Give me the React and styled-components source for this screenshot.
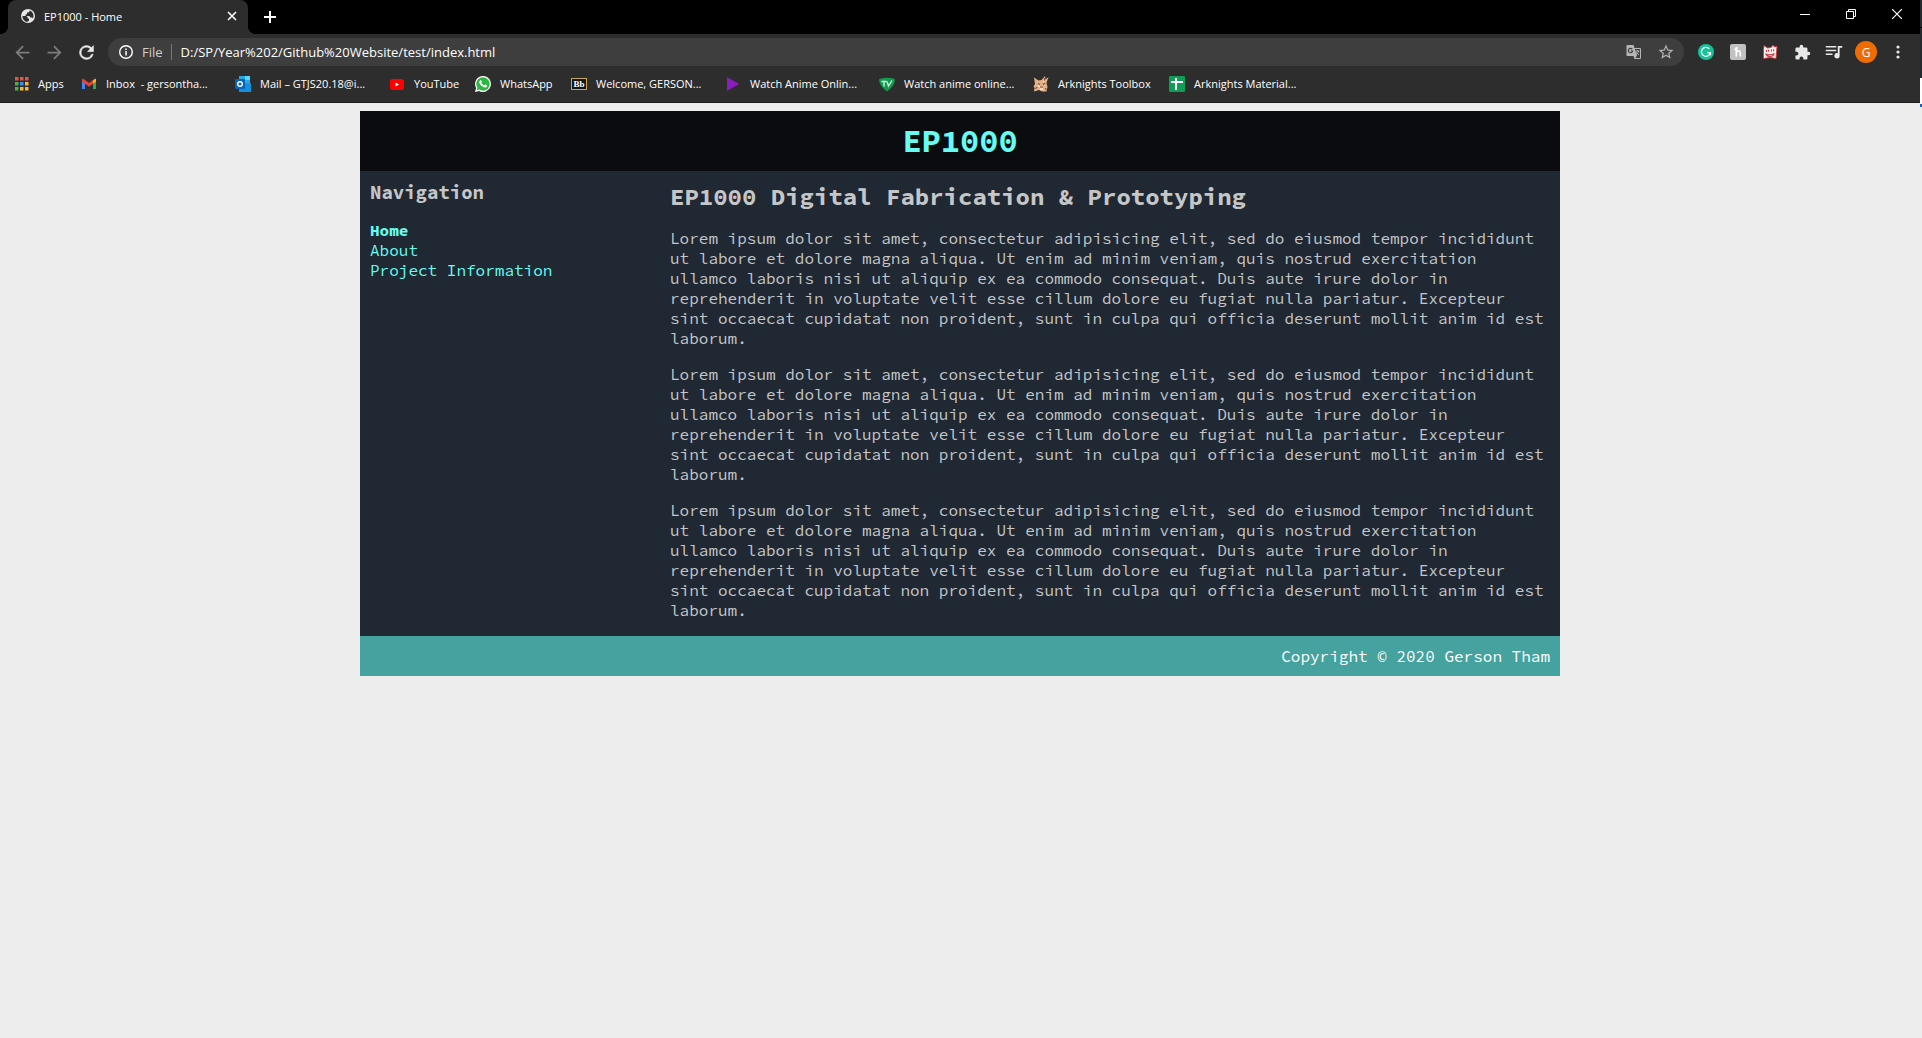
import React from "react";
import styled, { createGlobalStyle } from "styled-components";

const Global = createGlobalStyle`
  *, *::before, *::after { box-sizing: border-box; }
  body { margin: 0; background: #ededed; }
  button { border: 0; padding: 0; background: none; color: inherit; font: inherit; }
`;

const Desktop = styled.div`
  display: flex;
  align-items: flex-start;
  min-height: 100vh;
`;

const Browser = styled.div`
  flex: 1;
  min-width: 0;
`;

const Chrome = styled.header`
  font-family: "Open Sans", "Noto Sans", sans-serif;
  font-size: 12px;
  color: #fff;
  background: #2d2d2d;
  border-bottom: 1px solid #1b1b1b;
`;

const TabStrip = styled.div`
  display: flex;
  align-items: center;
  height: 34px;
  padding-left: 8px;
  background: #000;
`;

const Tab = styled.div`
  display: flex;
  align-items: center;
  gap: 8px;
  width: 240px;
  height: 34px;
  padding: 0 8px 2px 12px;
  border-radius: 8px 8px 0 0;
  background: #2d2d2d;
  font-size: 11px;
  position: relative;

  &::before, &::after {
    content: "";
    position: absolute;
    bottom: 0;
    width: 8px;
    height: 8px;
  }
  &::before { left: -8px; background: radial-gradient(circle at 0 0, #000 8px, #2d2d2d 8px); }
  &::after { right: -8px; background: radial-gradient(circle at 100% 0, #000 8px, #2d2d2d 8px); }
`;

const TabTitle = styled.span`flex: 1;`;

const IconButton = styled.button`
  display: flex;
  align-items: center;
  justify-content: center;
  flex: none;
  width: ${(p) => p.$size || 32}px;
  height: ${(p) => Math.min(p.$size || 32, 28)}px;
  color: ${(p) => p.$color || "#e8e8e8"};
`;

const NewTab = styled(IconButton)`margin-left: 6px; color: #fff;`;

const WindowControls = styled.div`
  display: flex;
  align-self: flex-start;
  margin-left: auto;
  color: #fff;
`;

const Toolbar = styled.div`
  display: flex;
  align-items: center;
  height: 36px;
  padding: 0 6px;
`;

const Omnibox = styled.div`
  display: flex;
  align-items: center;
  flex: 1;
  height: 28px;
  margin-left: 6px;
  padding: 0 2px 0 10px;
  border-radius: 14px;
  background: #3e3e3e;
`;

const Scheme = styled.span`
  margin-left: 8px;
  padding-right: 8px;
  font-size: 13px;
  line-height: 16px;
  border-right: 1px solid #777;
  color: #cfcfcf;
`;

const Address = styled.input`
  flex: 1;
  border: 0;
  outline: 0;
  padding: 0 0 0 9px;
  background: transparent;
  color: #fff;
  font: 13px "Open Sans", "Noto Sans", sans-serif;
`;

const Extensions = styled.div`
  display: flex;
  align-items: center;
  padding-left: 6px;
`;

const Bookmarks = styled.nav`
  display: flex;
  align-items: center;
  height: 32px;
  padding: 0 0 5px 13px;
`;

const Bookmark = styled.a`
  display: flex;
  align-items: center;
  gap: 9px;
  flex: none;
  width: ${(p) => p.$width}px;
  height: 26px;
  color: #fff;
  font-size: 11px;
  white-space: pre;
  text-decoration: none;
  svg { flex: none; }
`;

const EdgeWindow = styled.div`
  flex: none;
  width: 2px;
  height: 107px;
  background: linear-gradient(#232a30 27px, #000 27px 28px, #232a30 28px 78px, #fff 78px 104px, #1c5fb5 104px);
`;

const mono = `"Source Code Pro", "Liberation Mono", monospace`;

const Page = styled.div`
  width: 100%;
  max-width: 1200px;
  margin: 8px auto;
  font: 16px/20px ${mono};
  color: #c5c6c7;
  background: #202833;
`;

const Banner = styled.header`
  background: #0b0c10;
  text-align: center;
  h1 { margin: 0; padding: 10px; font-size: 32px; line-height: 40px; color: #66fcf1; }
`;

const Columns = styled.div`
  display: grid;
  grid-template-columns: 1fr 3fr;
`;

const SideNav = styled.nav`
  padding: 10px;
  h3 { margin: 0 0 16px; font-size: 19px; line-height: 23px; }
  ul { margin: 0; padding: 0; list-style: none; }
`;

const NavLink = styled.a`
  color: #66fcf1;
  text-decoration: none;
  font-weight: ${(p) => (p.$active ? "bold" : "normal")};
`;

const Main = styled.main`
  padding: 10px 10px 16px;
  h2 { margin: 0; font-size: 24px; line-height: 31px; }
  p { margin: 16px 0 0; }
`;

const Footer = styled.footer`
  padding: 10px;
  text-align: right;
  color: #fff;
  background: #45a29e;
`;

const Svg = ({ s = 16, vb = 24, children, ...rest }) => (
  <svg width={s} height={s} viewBox={`0 0 ${vb} ${vb}`} fill="currentColor" aria-hidden="true" {...rest}>{children}</svg>
);
const line = { fill: "none", stroke: "currentColor" };

const Globe = () => (
  <Svg s={16} vb={16}>
    <circle cx="8" cy="8" r="7" fill="#e8e8e8" />
    <path d="M2.400 8h3.400c1.300 0 1.800.8 1.800 1.700v.8H9v1.400c0 .8-.6 1.300-1.400 1.300v.8C4.600 13.800 2.400 11.200 2.400 8zM9.600 2.400v.7c0 .8-.6 1.300-1.300 1.300H7v1.300c0 .5-.3.700-.7.700h-.700V8H9c1 0 1 1.400 1.400 1.400h1.300c.7 0 1.100.4 1.300 1C14.400 7.200 13 3.600 9.600 2.400z" fill="#2d2d2d" />
  </Svg>
);
const Arrow = ({ flip }) => (
  <Svg s={21}><path d={flip ? "M12 4l-1.400 1.400 5.600 5.600H4v2h12.200l-5.600 5.600L12 20l8-8z" : "M20 11H7.800l5.600-5.600L12 4l-8 8 8 8 1.400-1.400L7.800 13H20z"} /></Svg>
);
const Reload = () => (
  <Svg s={21}><path d="M17.650 6.350A8 8 0 1 0 19.730 14h-2.080A6 6 0 1 1 12 6c1.660 0 3.140.69 4.220 1.780L13 11h7V4z" stroke="currentColor" strokeWidth=".5" /></Svg>
);
const Info = () => (
  <Svg s={16} vb={16}><circle cx="8" cy="8" r="6.300" {...line} strokeWidth="1.400" /><path d="M7.300 7h1.500v4.500H7.300zM7.300 4.400h1.500v1.500H7.300z" /></Svg>
);
const Translate = () => (
  <Svg s={16} vb={16}>
    <path d="M1.500 1h6l1 3h5.500a1 1 0 0 1 1 1v9a1 1 0 0 1-1 1H8.500l-1-3h-6a1 1 0 0 1-1-1V2a1 1 0 0 1 1-1z" fill="#b5b5b5" />
    <path d="M8.900 5H14v9H9.300l1.700-2.200z" fill="#3e3e3e" />
    <path d="M9.300 7h4.200M11.400 6v1M12.700 7c-.3 1.500-1.400 2.700-2.600 3.500M10.200 8c.5 1.200 1.600 2.200 2.700 2.800" {...line} strokeWidth=".9" />
    <path d="M6.300 5.200A2.200 2.200 0 1 0 6.700 7H4.700" fill="none" stroke="#3e3e3e" strokeWidth="1.100" />
  </Svg>
);
const Star = () => (
  <Svg s={18}><path d="m22 9.240-7.190-.62L12 2 9.190 8.630 2 9.240l5.460 4.730L5.820 21 12 17.270 18.180 21l-1.630-7.030zM12 15.400l-3.760 2.270 1-4.280-3.320-2.880 4.380-.38L12 6.100l1.710 4.040 4.380.38-3.320 2.880 1 4.280z" /></Svg>
);
const Grammarly = () => (
  <Svg vb={16}><circle cx="8" cy="8" r="8" fill="#15c39a" /><path d="M11.300 4.800A4.500 4.500 0 1 0 12.400 8.600H9M12.400 8.600v2.700" fill="none" stroke="#fff" strokeWidth="1.300" /></Svg>
);
const Honey = () => (
  <Svg vb={16}><rect width="16" height="16" rx="2" fill="#c1c1c1" /><path d="M6.300 12.500V3.200M4.500 5.800l3.300-2.300M6.300 9c.4-3 4-3 4 0v3.500" fill="none" stroke="#fff" strokeWidth="1.600" /></Svg>
);
const Cat = () => (
  <Svg vb={16}>
    <path d="M1.500 5 2.300 1.500 5.500 4l4-.8L11 1l1.500 2 2.500-.5-1 12-6-1-6.500 1z" fill="#f6eeee" stroke="#cf3b40" strokeWidth=".9" />
    <path d="M4.500 6v2M6.500 5.800v2M9.500 5.500v2M11.500 5.300v2M4 10c2 1 5.500.8 8-.3-.3 2-1.800 2.800-4 2.800S4.500 12 4 10z" fill="none" stroke="#cf3b40" strokeWidth="1.100" />
  </Svg>
);
const Puzzle = () => (
  <Svg s={17}><path d="M20.500 11H19V7a2 2 0 0 0-2-2h-4V3.500a2.500 2.500 0 0 0-5 0V5H4a2 2 0 0 0-2 2v3.800h1.500a2.700 2.700 0 0 1 0 5.400H2V20a2 2 0 0 0 2 2h3.800v-1.500a2.700 2.700 0 0 1 5.400 0V22H17a2 2 0 0 0 2-2v-4h1.500a2.500 2.500 0 0 0 0-5z" /></Svg>
);
const MediaList = () => (
  <Svg s={18}><path d="M1 4h14v2H1zM1 9h14v2H1zM1 14h9v2H1zM17 4h6v2.300h-3.500V17a3.500 3.500 0 1 1-2.500-3.300z" /></Svg>
);
const Avatar = styled.span`
  display: grid;
  place-items: center;
  width: 22px;
  height: 22px;
  border-radius: 50%;
  background: #ee6c00;
  color: #fff;
`;
const Dots = () => (
  <Svg vb={16}><circle cx="8" cy="3" r="1.600" /><circle cx="8" cy="8" r="1.600" /><circle cx="8" cy="13" r="1.600" /></Svg>
);

const AppsIcon = () => (
  <Svg vb={16}>
    {["#e2574c", "#e2574c", "#e2574c", "#4caf50", "#3f8cf3", "#f5b83d", "#4caf50", "#f5b83d", "#f5b83d"].map((c, i) => (
      <rect key={i} x={2 + (i % 3) * 5} y={1 + Math.floor(i / 3) * 5} width="3.500" height="3.500" fill={c} />
    ))}
  </Svg>
);
const Gmail = () => (
  <Svg vb={16}>
    <path d="M1 4v9h3V6.500z" fill="#4285f4" /><path d="M15 4v9h-3V6.500z" fill="#34a853" />
    <path d="M12 4.500 13.500 3c.8-.5 1.500 0 1.500 1v1.500l-3 2.300z" fill="#fbbc04" />
    <path d="M1 5.500V4c0-1 .9-1.500 1.700-.9L8 7l4-3v3.800L8 10.800z" fill="#ea4335" />
  </Svg>
);
const Outlook = () => (
  <Svg vb={16}><path d="M4 0h11v8H4z" fill="#28a8ea" /><path d="M10 0h5v4h-5z" fill="#50d9ff" /><path d="M4 8l12-1v9H4z" fill="#1490df" /><rect y="3" width="10" height="10" rx="1" fill="#0364b8" /><circle cx="5" cy="8" r="2.300" fill="none" stroke="#fff" strokeWidth="1.400" /></Svg>
);
const YouTube = () => (
  <Svg vb={16}><rect x="1" y="3" width="14" height="11" rx="2.500" fill="#f00" /><path d="M6.500 6.500v4l3.500-2z" fill="#fff" /></Svg>
);
const WhatsApp = () => (
  <Svg vb={16}>
    <path d="M8 0a8 8 0 0 0-6.900 12L0 16l4.100-1A8 8 0 1 0 8 0z" fill="#fff" />
    <path d="M8 1.300A6.700 6.700 0 0 0 2.400 11.700l-.7 2.600 2.600-.7A6.700 6.700 0 1 0 8 1.300z" fill="#2cb742" />
    <path d="M5.600 4.200c.5-.2.700 0 1 .8.500 1 .2 1.200-.3 1.800.7 1.300 1.600 2.100 2.900 2.600.7-.8.8-1.100 1.300-.9l1.500.8c.3.300 0 1.600-.8 2-2 1.200-7-2.400-7-5.200 0-.8.700-1.600 1.400-1.900z" fill="#fff" />
  </Svg>
);
const Blackboard = () => (
  <Svg vb={16}><rect x=".5" y="2.500" width="15" height="11" fill="#161616" stroke="#c9a652" /><text x="8" y="11" textAnchor="middle" fontSize="9" fontWeight="bold" fontFamily="Liberation Serif, serif" fill="#fff">Bb</text></Svg>
);
const Play = () => <Svg vb={16}><path d="M2 1l12 7-12 7z" fill="#8a1cc0" /></Svg>;
const TvBadge = () => (
  <Svg vb={16}><path d="M.3 3Q8 .5 15.700 3q1 5.500-7.700 12.500Q-.7 8.500.3 3z" fill="#129b4c" /><path d="M2.500 5.500h5M5 5.500v5M8 5.500l1.500 4.500L13 4.500" fill="none" stroke="#d4f5df" strokeWidth="1.300" /></Svg>
);
const Critter = () => (
  <Svg vb={16}>
    <path d="M1 1.500 5.500 4.500 8.500 4 12 0l.5 3.500L15.500 1 13.500 7l1 4-1 4.500H9L6 14l-5 1.500L1.500 12 .5 10.500 2 8z" fill="#e3b28a" />
    <path d="M5 7.500l2 1M10 8.500l2-1.500M7 11h3M1.500 12.500l3-1M12 12.500l2 1M11.500 4.500V2" stroke="#8f4c37" strokeWidth="1.200" fill="none" />
    <path d="M5 10l2 .5M10 5l1 1M7 13h3" stroke="#fbe6cb" strokeWidth="1.500" />
  </Svg>
);
const Sheets = () => (
  <Svg vb={16}><rect width="16" height="16" rx="1" fill="#0f9d58" /><path d="M2 6h12M7 2v12" stroke="#fff" strokeWidth="2" /></Svg>
);

const bookmarks = [
  ["Apps", AppsIcon, 68],
  ["Inbox  - gersontha...", Gmail, 154],
  ["Mail – GTJS20.18@i...", Outlook, 154],
  ["YouTube", YouTube, 86],
  ["WhatsApp", WhatsApp, 96],
  ["Welcome, GERSON...", Blackboard, 154],
  ["Watch Anime Onlin...", Play, 154],
  ["Watch anime online...", TvBadge, 154],
  ["Arknights Toolbox", Critter, 136],
  ["Arknights Material...", Sheets, 154],
];

const extensions = [
  ["Grammarly", Grammarly],
  ["Honey", Honey],
  ["Cat extension", Cat],
  ["Extensions", Puzzle],
  ["Media controls", MediaList],
];

const navItems = ["Home", "About", "Project Information"];

const lorem =
  "Lorem ipsum dolor sit amet, consectetur adipisicing elit, sed do eiusmod tempor incididunt ut labore et dolore magna aliqua. Ut enim ad minim veniam, quis nostrud exercitation ullamco laboris nisi ut aliquip ex ea commodo consequat. Duis aute irure dolor in reprehenderit in voluptate velit esse cillum dolore eu fugiat nulla pariatur. Excepteur sint occaecat cupidatat non proident, sunt in culpa qui officia deserunt mollit anim id est laborum.";

export default function App() {
  return (
    <Desktop>
      <Global />
      <Browser>
        <Chrome>
          <TabStrip>
            <Tab>
              <Globe />
              <TabTitle>EP1000 - Home</TabTitle>
              <IconButton $size={16} $color="#fff" aria-label="Close tab">
                <Svg s={10} vb={10}><path d="M1 1l8 8M9 1 1 9" {...line} strokeWidth="1.600" /></Svg>
              </IconButton>
            </Tab>
            <NewTab aria-label="New tab">
              <Svg s={12} vb={12}><path d="M6 0v12M0 6h12" {...line} strokeWidth="2" /></Svg>
            </NewTab>
            <WindowControls>
              <IconButton $size={46} $color="#fff" aria-label="Minimize"><Svg s={10} vb={10}><path d="M0 5.500h10" {...line} /></Svg></IconButton>
              <IconButton $size={46} $color="#fff" aria-label="Restore"><Svg s={10} vb={10}><path d="M.5 2.500h7v7h-7zM2.500 2.500v-2h7v7h-2" {...line} /></Svg></IconButton>
              <IconButton $size={46} $color="#fff" aria-label="Close"><Svg s={10} vb={10}><path d="M0 0l10 10M10 0 0 10" {...line} strokeWidth="1.200" /></Svg></IconButton>
            </WindowControls>
          </TabStrip>
          <Toolbar>
            <IconButton $color="#7c7c7c" aria-label="Back"><Arrow /></IconButton>
            <IconButton $color="#7c7c7c" aria-label="Forward"><Arrow flip /></IconButton>
            <IconButton aria-label="Reload"><Reload /></IconButton>
            <Omnibox>
              <Info />
              <Scheme>File</Scheme>
              <Address aria-label="Address" defaultValue="D:/SP/Year%202/Github%20Website/test/index.html" />
              <IconButton $color="#b5b5b5" aria-label="Translate"><Translate /></IconButton>
              <IconButton $color="#b5b5b5" aria-label="Bookmark this page"><Star /></IconButton>
            </Omnibox>
            <Extensions>
              {extensions.map(([label, Icon]) => (
                <IconButton key={label} aria-label={label}><Icon /></IconButton>
              ))}
              <IconButton aria-label="Profile"><Avatar>G</Avatar></IconButton>
              <IconButton aria-label="Menu"><Dots /></IconButton>
            </Extensions>
          </Toolbar>
          <Bookmarks aria-label="Bookmarks">
            {bookmarks.map(([label, Icon, width]) => (
              <Bookmark key={label} href="#" $width={width}><Icon />{label}</Bookmark>
            ))}
          </Bookmarks>
        </Chrome>
        <Page>
          <Banner><h1>EP1000</h1></Banner>
          <Columns>
            <SideNav aria-label="Navigation">
              <h3>Navigation</h3>
              <ul>
                {navItems.map((item, i) => (
                  <li key={item}><NavLink href="#" $active={i === 0}>{item}</NavLink></li>
                ))}
              </ul>
            </SideNav>
            <Main>
              <h2>EP1000 Digital Fabrication &amp; Prototyping</h2>
              <p>{lorem}</p>
              <p>{lorem}</p>
              <p>{lorem}</p>
            </Main>
          </Columns>
          <Footer>Copyright © 2020 Gerson Tham</Footer>
        </Page>
      </Browser>
      <EdgeWindow />
    </Desktop>
  );
}
